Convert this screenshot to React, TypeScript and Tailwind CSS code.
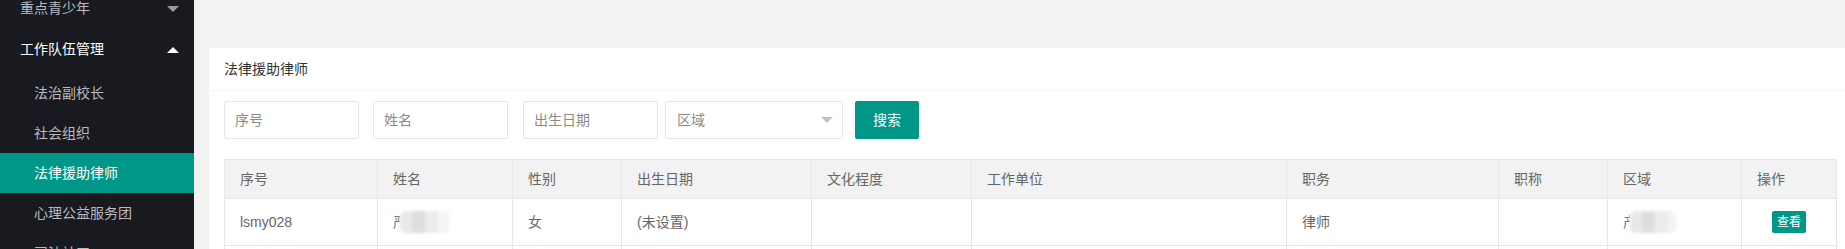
import React from "react";

const cols = [153, 135, 109, 190, 160, 315, 212, 109, 134, 95];
const colClasses = [
  "w-[153px]",
  "w-[135px]",
  "w-[109px]",
  "w-[190px]",
  "w-[160px]",
  "w-[315px]",
  "w-[212px]",
  "w-[109px]",
  "w-[134px]",
  "w-[95px]",
];
const headers = ["序号", "姓名", "性别", "出生日期", "文化程度", "工作单位", "职务", "职称", "区域", "操作"];

function Caret({ up, color }: { up?: boolean; color: string }) {
  return (
    <svg width="12" height="6" viewBox="0 0 12 6" className="shrink-0">
      {up ? <path d="M0 6 L6 0 L12 6 Z" fill={color} /> : <path d="M0 0 L12 0 L6 6 Z" fill={color} />}
    </svg>
  );
}

function Blurred({ ch, wide }: { ch: string; wide?: boolean }) {
  return (
    <div className="relative flex items-center h-[24px]">
      <span className="inline-block w-[7px] overflow-hidden text-[#777] whitespace-nowrap">{ch}</span>
      <div className="flex h-[22px] blur-[1.5px] rounded-[6px] overflow-hidden">
        <div className="w-[12px] bg-[#e8e8e8]" />
        <div className="w-[13px] bg-[#dedede]" />
        <div className="w-[13px] bg-[#ececec]" />
        {wide ? <div className="w-[12px] bg-[#f5f5f5]" /> : <div className="w-[8px] bg-[#f3f3f3]" />}
      </div>
    </div>
  );
}

export default function App() {
  return (
    <div className="flex w-full h-[249px] overflow-hidden bg-[#f2f2f2] font-['Liberation_Sans','Noto_Sans_CJK_SC',sans-serif] text-[14px]">
      {/* Sidebar */}
      <div className="w-[194px] shrink-0 bg-[#191a20] overflow-hidden">
        <div className="-mt-[12px] flex flex-col">
          <div className="h-[41px] flex items-center justify-between pl-[20px] pr-[15px] text-[#b9babd]">
            <span>重点青少年</span>
            <Caret color="#9a9a9d" />
          </div>
          <div className="h-[41px] flex items-center justify-between pl-[20px] pr-[15px] text-white">
            <span>工作队伍管理</span>
            <Caret up color="#ffffff" />
          </div>
          <div className="pt-[3px] flex flex-col">
            <div className="h-[40px] flex items-center pl-[34px] text-[#b9babd]">法治副校长</div>
            <div className="h-[40px] flex items-center pl-[34px] text-[#b9babd]">社会组织</div>
            <div className="h-[40px] flex items-center pl-[34px] text-white bg-[#009688]">法律援助律师</div>
            <div className="h-[40px] flex items-center pl-[34px] text-[#b9babd]">心理公益服务团</div>
            <div className="h-[40px] flex items-center pl-[34px] text-[#b9babd]">司法社工</div>
          </div>
        </div>
      </div>

      {/* Main */}
      <div className="flex-1 min-w-0 pt-[48px] pl-[15px]">
        <div className="bg-white h-full">
          <div className="h-[43px] flex items-center pl-[15px] border-b border-[#f6f6f6] text-[#333]">
            法律援助律师
          </div>
          <div className="pl-[15px] pr-[9px] pt-[10px]">
            <div className="flex items-center h-[38px]">
              <div className="w-[135px] h-[38px] border border-[#e6e6e6] rounded-[2px] flex items-center px-[10px] text-[#8a8a8a]">
                序号
              </div>
              <div className="ml-[14px] w-[135px] h-[38px] border border-[#e6e6e6] rounded-[2px] flex items-center px-[10px] text-[#8a8a8a]">
                姓名
              </div>
              <div className="ml-[15px] w-[135px] h-[38px] border border-[#e6e6e6] rounded-[2px] flex items-center px-[10px] text-[#8a8a8a]">
                出生日期
              </div>
              <div className="ml-[7px] w-[178px] h-[38px] border border-[#e6e6e6] rounded-[2px] flex items-center justify-between pl-[11px] pr-[9px] text-[#8a8a8a]">
                <span>区域</span>
                <Caret color="#c2c2c2" />
              </div>
              <div className="ml-[12px] w-[64px] h-[38px] rounded-[2px] bg-[#009688] text-white flex items-center justify-center">
                搜索
              </div>
            </div>

            <table className="mt-[20px] table-fixed border-collapse w-[1612px] text-[#666]">
              <colgroup>
                {cols.map((_, i) => (
                  <col key={i} className={colClasses[i]} />
                ))}
              </colgroup>
              <thead>
                <tr>
                  {headers.map((h) => (
                    <th
                      key={h}
                      className="h-[39px] bg-[#f2f2f2] border border-[#e6e6e6] font-normal text-left px-[15px] p-0"
                    >
                      {h}
                    </th>
                  ))}
                </tr>
              </thead>
              <tbody>
                <tr>
                  <td className="h-[47px] border border-[#e6e6e6] px-[15px]">lsmy028</td>
                  <td className="border border-[#e6e6e6] px-[15px]">
                    <Blurred ch="严" wide />
                  </td>
                  <td className="border border-[#e6e6e6] px-[15px]">女</td>
                  <td className="border border-[#e6e6e6] px-[15px]">(未设置)</td>
                  <td className="border border-[#e6e6e6] px-[15px]"></td>
                  <td className="border border-[#e6e6e6] px-[15px]"></td>
                  <td className="border border-[#e6e6e6] px-[15px]">律师</td>
                  <td className="border border-[#e6e6e6] px-[15px]"></td>
                  <td className="border border-[#e6e6e6] px-[15px]">
                    <Blurred ch="产" />
                  </td>
                  <td className="border border-[#e6e6e6] px-[15px]">
                    <div className="flex justify-center">
                      <span className="h-[22px] px-[5px] rounded-[2px] bg-[#009688] text-white text-[12px] flex items-center">
                        查看
                      </span>
                    </div>
                  </td>
                </tr>
                <tr>
                  {cols.map((_, i) => (
                    <td key={i} className="h-[47px] border border-[#e6e6e6] px-[15px]"></td>
                  ))}
                </tr>
              </tbody>
            </table>
          </div>
        </div>
      </div>
    </div>
  );
}
